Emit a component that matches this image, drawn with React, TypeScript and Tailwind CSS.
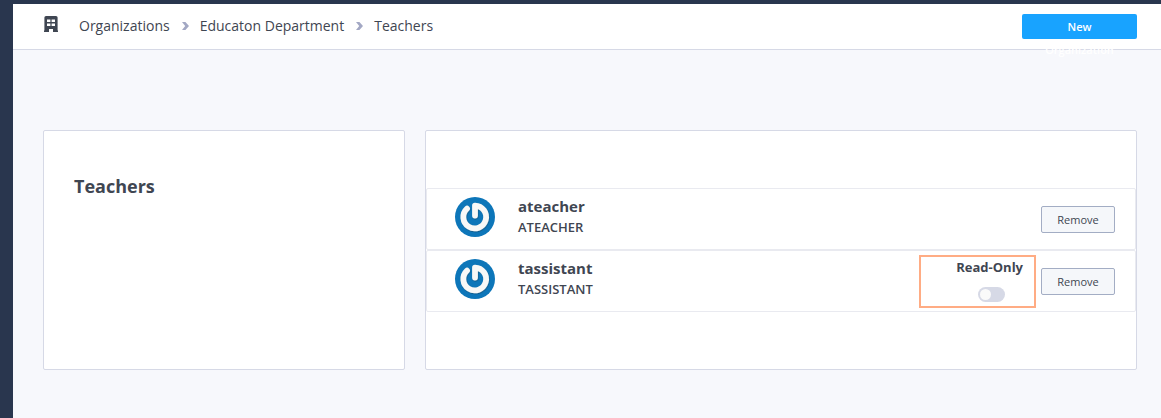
import React from 'react';

function Building() {
  return (
    <svg className="-mt-1 block h-4 w-[14px] shrink-0" viewBox="0 0 14 16" fill="#3f4652">
      <path
        fillRule="evenodd"
        d="M2 0H12Q13.6 0 13.6 1.6V14.6H14V16H9V13H5V16H0V14.6H.4V1.6Q.4 0 2 0ZM3 3.4V6H6.4V3.4ZM7.6 3.4V6H11V3.4ZM3 7.6V10H6.4V7.6ZM7.6 7.6V10H11V7.6Z"
      />
    </svg>
  );
}

function Chevron() {
  return (
    <svg className="block h-2 w-[7px] shrink-0" viewBox="0 0 7 8" fill="#a3a8c4">
      <path d="M0 0H3.4L7 4L3.4 8H0L3.2 4Z" />
    </svg>
  );
}

function Avatar({ id }: { id: string }) {
  return (
    <svg className="mt-2 block size-10 shrink-0" viewBox="0 0 40 40">
      <defs>
        <filter id={id} x="-20%" y="-20%" width="150%" height="150%">
          <feDropShadow dx="0.4" dy="0.6" stdDeviation="0.6" floodColor="#222" floodOpacity="0.5" />
        </filter>
      </defs>
      <circle cx="20" cy="20" r="20" fill="#0d76b9" />
      <path
        d="M12 11.6A11.4 11.4 0 1 0 20 8.6V18.6"
        fill="none"
        stroke="#f8f8f7"
        strokeWidth="5.8"
        strokeLinecap="round"
        strokeLinejoin="round"
        filter={`url(#${id})`}
      />
    </svg>
  );
}

function Member({ name, label, readOnly }: { name: string; label: string; readOnly?: boolean }) {
  return (
    <div className="relative flex h-[62px] rounded-[2px] border border-[#e9eaf0] pr-5 pl-7">
      <Avatar id={`shadow-${name}`} />
      <div className="ml-[23px] pt-1.5">
        <div className="text-[15px] leading-[22px] font-bold">{name}</div>
        <div className="text-[13px] leading-5 font-semibold">{label}</div>
      </div>
      {readOnly && (
        <>
          <div className="mr-[18px] ml-auto flex flex-col items-center pt-[7px]">
            <span className="text-[13px] leading-[18px] font-bold">Read-Only</span>
            <span className="mt-[11px] ml-[3px] flex h-[15px] w-[27px] items-center rounded-full bg-[#d6d9e6] pl-0.5">
              <span className="size-[11px] rounded-full bg-[#fafafa]" />
            </span>
          </div>
          <div className="absolute top-1 left-[492px] h-[53px] w-[117px] border-2 border-[#ffac84]" />
        </>
      )}
      <button
        className={`mt-[17px] h-[27px] w-[74px] shrink-0 rounded-[2px] border border-[#a3adc4] bg-[#f5f7fa] text-[11px] leading-none ${readOnly ? '' : 'ml-auto'}`}
      >
        Remove
      </button>
    </div>
  );
}

export default function App() {
  return (
    <div className="h-[418px] w-[1161px] overflow-hidden bg-[#29364e] pt-1 pl-[13px] font-['Open_Sans',sans-serif] text-[#3f4652]">
      <div className="h-full bg-[#f7f8fc]">
        <header className="flex h-[46px] items-center border-b border-[#d6d9e6] bg-white pr-6 pl-[31px]">
          <nav className="-mt-0.5 flex items-center text-[14px] leading-5">
            <Building />
            <span className="ml-[21px]">Organizations</span>
            <span className="mr-[11px] ml-3"><Chevron /></span>
            <span>Educaton Department</span>
            <span className="mr-[11px] ml-3"><Chevron /></span>
            <span>Teachers</span>
          </nav>
          <button className="ml-auto h-[25px] w-[115px] rounded-[2px] bg-[#18a3ff] px-5 text-[11px] font-semibold text-white">
            <span className="block h-[25px] pt-px leading-[23px]">New Organization</span>
          </button>
        </header>
        <main className="flex gap-5 px-[30px] pt-20 pr-6">
          <section className="h-60 w-[362px] rounded-[2px] border border-[#d6d9e6] bg-white px-[30px] pt-[42px]">
            <h1 className="text-[18px] leading-[26px] font-bold">Teachers</h1>
          </section>
          <section className="h-60 w-[712px] rounded-[2px] border border-[#d6d9e6] bg-white pt-[57px]">
            <Member name="ateacher" label="ATEACHER" />
            <Member name="tassistant" label="TASSISTANT" readOnly />
          </section>
        </main>
      </div>
    </div>
  );
}
